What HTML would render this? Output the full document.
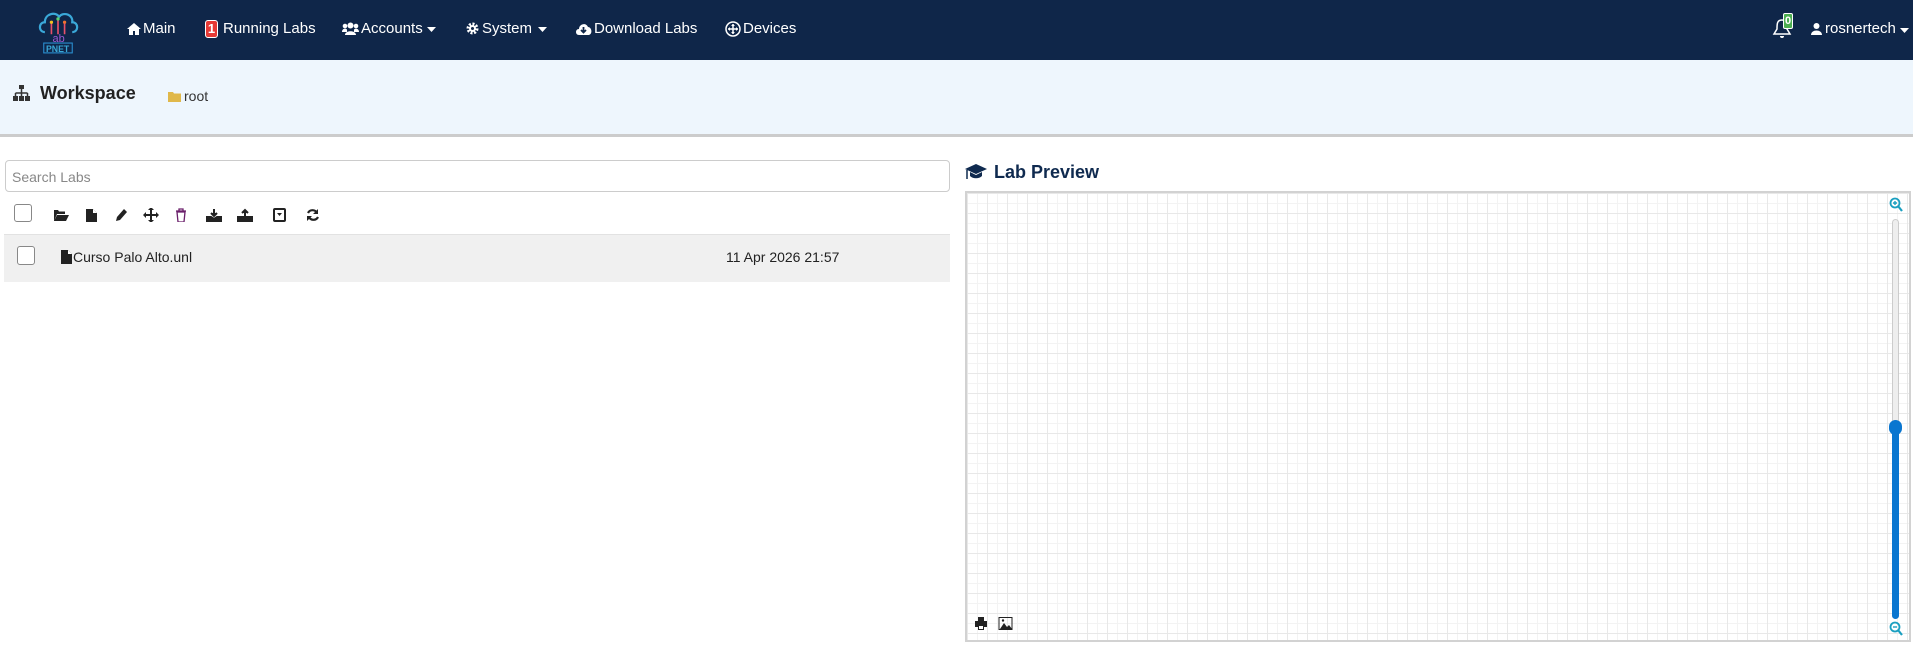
<!DOCTYPE html>
<html><head><meta charset="utf-8"><style>
*{box-sizing:border-box;margin:0;padding:0}
body{width:1913px;height:655px;background:#fff;font-family:"Liberation Sans",sans-serif;position:relative;overflow:hidden;color:#222}
.nav{position:absolute;left:0;top:0;width:1913px;height:60px;background:#0f2649}
.a{position:absolute;color:#fff;font-size:15px;top:20px;white-space:nowrap}
.hdr{position:absolute;left:0;top:60px;width:1913px;height:77px;background:#eef6fd;border-bottom:3px solid #ccc}
.ab{position:absolute}
svg{display:block}
.grid{position:absolute;left:965px;top:191px;width:946px;height:451px;border:2px solid #d2d2d2;
background-color:#fff;
background-image:linear-gradient(#e8e8e8 1px,transparent 1px),linear-gradient(90deg,#e8e8e8 1px,transparent 1px),linear-gradient(#f3f3f3 1px,transparent 1px),linear-gradient(90deg,#f3f3f3 1px,transparent 1px);
background-size:20px 20px,20px 20px,10px 10px,10px 10px;background-position:0 0}
</style></head><body>
<div class="nav">
 <svg class="ab" style="left:36px;top:8px" width="44" height="46" viewBox="0 0 40 42">
  <path d="M8 22 C2 22 2 13 8 13 C8 5 18 3 21 8 C25 3 34 6 33 13 C39 13 39 22 33 22" fill="none" stroke="#3aa8d8" stroke-width="2"/>
  <path d="M14 14v10M20 10v14M26 14v10" stroke="#e8506a" stroke-width="1.5"/>
  <circle cx="14" cy="13" r="1.5" fill="#f0c020"/><circle cx="20" cy="10" r="1.5" fill="#5ad070"/><circle cx="26" cy="13" r="1.5" fill="#f07030"/>
  <text x="15" y="31" font-size="10" fill="#9b59d0" font-family="Liberation Sans">ab</text>
  <rect x="7" y="32" width="26" height="9" fill="none" stroke="#2a8fd0" stroke-width="1"/>
  <text x="9" y="40" font-size="8" fill="#3aa8d8" font-family="Liberation Sans" font-weight="bold">PNET</text>
 </svg>
 <svg class="ab" style="left:127px;top:23px" width="14" height="12" viewBox="0 0 14 12"><path d="M7 0L0 6h2v6h4V8h2v4h4V6h2z" fill="#fff"/></svg>
 <div class="a" style="left:143px">Main</div>
 <div class="ab" style="left:205px;top:20px;width:13px;height:18px;background:#e53935;border-radius:3px;border:1px solid #fff;color:#fff;font-size:13px;font-weight:bold;text-align:center;line-height:16px">1</div>
 <div class="a" style="left:223px">Running Labs</div>
 <svg class="ab" style="left:342px;top:22px" width="17" height="13" viewBox="0 0 17 13"><circle cx="8.5" cy="3.5" r="3" fill="#fff"/><circle cx="3" cy="4" r="2.3" fill="#fff"/><circle cx="14" cy="4" r="2.3" fill="#fff"/><path d="M3 13c0-5 11-5 11 0zM0 10c0-4 5-4 5-2v2zM17 10c0-4-5-4-5-2v2z" fill="#fff"/></svg>
 <div class="a" style="left:361px">Accounts</div>
 <svg class="ab" style="left:427px;top:27px" width="9" height="5"><path d="M0 0h9L4.5 5z" fill="#fff"/></svg>
 <svg class="ab" style="left:466px;top:22px" width="13" height="13" viewBox="0 0 13 13"><circle cx="6.5" cy="6.5" r="4.5" fill="none" stroke="#fff" stroke-width="3" stroke-dasharray="2 1.5"/><circle cx="6.5" cy="6.5" r="3.5" fill="#fff"/><circle cx="6.5" cy="6.5" r="1.5" fill="#0f2649"/></svg>
 <div class="a" style="left:482px">System</div>
 <svg class="ab" style="left:538px;top:27px" width="9" height="5"><path d="M0 0h9L4.5 5z" fill="#fff"/></svg>
 <svg class="ab" style="left:575px;top:22px" width="17" height="13" viewBox="0 0 17 13"><path d="M4 13C0 13 0 7 4 7C4 2 11 0 13 5C17 5 18 13 13 13z" fill="#fff"/><path d="M8.5 5v5M6 8l2.5 2.5L11 8" stroke="#0f2649" stroke-width="1.8" fill="none"/></svg>
 <div class="a" style="left:594px">Download Labs</div>
 <svg class="ab" style="left:725px;top:21px" width="16" height="16" viewBox="0 0 16 16"><circle cx="8" cy="8" r="7" fill="none" stroke="#fff" stroke-width="1.5"/><path d="M8 3v10M3 8h10" stroke="#fff" stroke-width="1.5"/><path d="M8 3l-2 2h4zM8 13l-2-2h4zM3 8l2-2v4zM13 8l-2-2v4z" fill="#fff"/></svg>
 <div class="a" style="left:743px">Devices</div>
 <svg class="ab" style="left:1772px;top:15px" width="20" height="26" viewBox="0 0 20 26"><path d="M10 5C5 5 5 9 5 14L2 19h16l-3-5c0-5 0-9-5-9z" fill="none" stroke="#fff" stroke-width="1.5"/><path d="M8 21a2 2 0 0 0 4 0z" fill="#fff"/></svg>
 <div class="ab" style="left:1783px;top:13px;width:10px;height:16px;background:#4caf50;border:1px solid #fff;border-radius:2px;color:#fff;font-size:11px;font-weight:bold;text-align:center;line-height:14px">0</div>
 <svg class="ab" style="left:1811px;top:23px" width="11" height="12" viewBox="0 0 11 12"><circle cx="5.5" cy="3" r="3" fill="#fff"/><path d="M0 12c0-6 11-6 11 0z" fill="#fff"/></svg>
 <div class="a" style="left:1825px">rosnertech</div>
 <svg class="ab" style="left:1900px;top:28px" width="9" height="5"><path d="M0 0h9L4.5 5z" fill="#fff"/></svg>
</div>
<div class="hdr"></div>
<svg class="ab" style="left:13px;top:85px" width="17" height="16" viewBox="0 0 17 16"><rect x="6" y="0" width="5" height="4" fill="#333"/><path d="M8.5 4v4M2.5 8h12M2.5 8v3M8.5 8v3M14.5 8v3" stroke="#333" stroke-width="1.5" fill="none"/><rect x="0" y="11" width="5" height="5" fill="#333"/><rect x="6" y="11" width="5" height="5" fill="#333"/><rect x="12" y="11" width="5" height="5" fill="#333"/></svg>
<div class="ab" style="left:40px;top:83px;font-size:18px;font-weight:bold;color:#222">Workspace</div>
<svg class="ab" style="left:168px;top:91px" width="13" height="11" viewBox="0 0 13 11"><path d="M0 1h5l1 1.5h7V11H0z" fill="#e0b84a"/></svg>
<div class="ab" style="left:184px;top:88px;font-size:14px;color:#333">root</div>

<div class="ab" style="left:5px;top:160px;width:945px;height:32px;border:1px solid #ccc;border-radius:4px;padding:8px 6px;font-size:14px;color:#888">Search Labs</div>
<div class="ab" style="left:14px;top:204px;width:18px;height:18px;border:1px solid #888;border-radius:3px;background:#fff"></div>
<svg class="ab" style="left:54px;top:208px" width="270" height="14" viewBox="0 0 270 14">
 <path d="M0 2h4l1 1.5h6V6H3L0 13zM3 7h12l-3 6H0z" fill="#222"/>
 <path d="M32 1h7l4 4v9H32z" fill="#222"/><path d="M39 1v4h4" fill="#fff"/>
 <path d="M62 13l1-4 7-8 3 3-7 8z" fill="#222"/>
 <path d="M97 0v14M90 7h14" stroke="#222" stroke-width="2"/><path d="M97 -1l-3 3h6zM97 15l-3-3h6zM89 7l3-3v6zM105 7l-3-3v6z" fill="#222"/>
 <path d="M122 3h10M125 3V1h4v2M123 4h8l-1 10h-6z" fill="none" stroke="#6a1f6a" stroke-width="1.3"/>
 <path d="M160 1v6M157 5l3 3 3-3M153 9h4l3 2 3-2h4v5h-14z" stroke="#222" stroke-width="2" fill="#222"/>
 <path d="M191 9V3M188 5l3-3 3 3M184 9h14v5h-14z" stroke="#222" stroke-width="2" fill="#222"/>
 <rect x="220" y="1" width="11" height="12" rx="1" fill="none" stroke="#222" stroke-width="2"/><path d="M223 5h5l-2.5 3z" fill="#222"/>
 <path d="M254 5a5 5 0 0 1 9 0M264 9a5 5 0 0 1-9 0" fill="none" stroke="#222" stroke-width="2.2"/><path d="M264 1v5h-5zM253 13V8h5z" fill="#222"/>
</svg>
<div class="ab" style="left:4px;top:234px;width:946px;height:48px;background:#f0f0f0;border-top:1px solid #e2e2e2"></div>
<div class="ab" style="left:17px;top:246px;width:18px;height:19px;border:1px solid #888;border-radius:3px;background:#fff"></div>
<svg class="ab" style="left:61px;top:250px" width="11" height="14" viewBox="0 0 11 14"><path d="M0 0h7l4 4v10H0z" fill="#222"/><path d="M7 0v4h4" fill="#fff"/></svg>
<div class="ab" style="left:73px;top:249px;font-size:14px;color:#222">Curso Palo Alto.unl</div>
<div class="ab" style="left:726px;top:249px;font-size:14px;color:#222">11 Apr 2026 21:57</div>

<svg class="ab" style="left:965px;top:164px" width="22" height="16" viewBox="0 0 22 16"><path d="M11 0L0 5l11 5 11-5z" fill="#0f2a4f"/><path d="M5 8v4c3 3 9 3 12 0V8l-6 3z" fill="#0f2a4f"/><path d="M2 6v9" stroke="#0f2a4f" stroke-width="1.5"/></svg>
<div class="ab" style="left:994px;top:162px;font-size:18px;font-weight:bold;color:#0f2a4f">Lab Preview</div>
<div class="grid"></div>
<svg class="ab" style="left:1889px;top:197px" width="14" height="15" viewBox="0 0 14 15"><circle cx="6" cy="6" r="4.5" fill="none" stroke="#1a9fc0" stroke-width="1.8"/><path d="M4 6h4M6 4v4" stroke="#1a9fc0" stroke-width="1.4"/><path d="M9 9l4 5" stroke="#1a9fc0" stroke-width="2.2"/></svg>
<div class="ab" style="left:1892px;top:219px;width:7px;height:400px;border:1px solid #ccc;border-radius:4px;background:#eee"></div>
<div class="ab" style="left:1892px;top:425px;width:7px;height:194px;border-radius:4px;background:#0a76d0"></div>
<div class="ab" style="left:1889px;top:420px;width:13px;height:15px;border-radius:7px;background:#0a76d0"></div>
<svg class="ab" style="left:1889px;top:621px" width="14" height="15" viewBox="0 0 14 15"><circle cx="6" cy="6" r="4.5" fill="none" stroke="#1a9fc0" stroke-width="1.8"/><path d="M4 6h4" stroke="#1a9fc0" stroke-width="1.4"/><path d="M9 9l4 5" stroke="#1a9fc0" stroke-width="2.2"/></svg>
<svg class="ab" style="left:975px;top:617px" width="40" height="13" viewBox="0 0 40 13"><path d="M3 0h6v4H3zM0 4h12v6H0zM3 8h6v5H3z" fill="#222"/><path d="M4 9h4v3H4z" fill="#fff"/><rect x="24" y="0.5" width="13" height="12" fill="none" stroke="#222"/><path d="M25 12l4-6 3 4 2-2 3 4z" fill="#222"/><circle cx="28" cy="3.5" r="1.2" fill="#222"/></svg>
</body></html>
